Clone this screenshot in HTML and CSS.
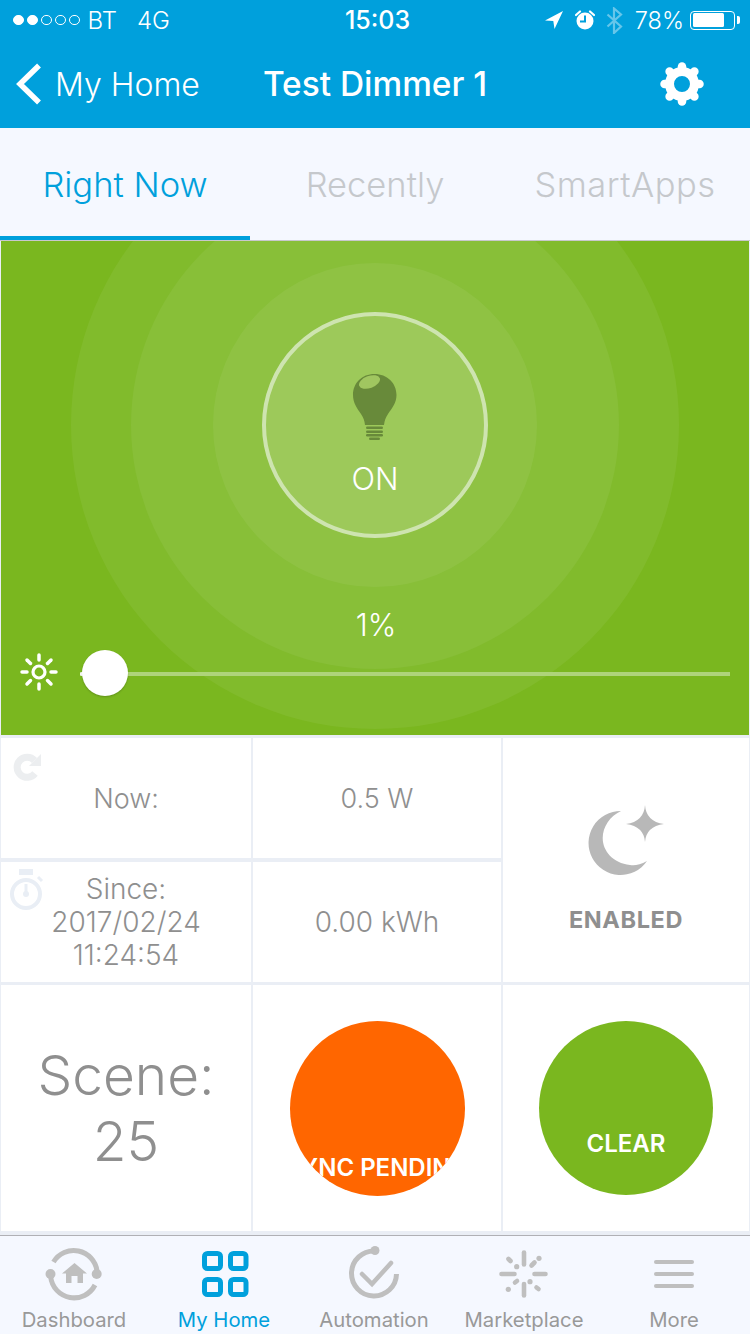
FILE: index.html
```html
<!DOCTYPE html>
<html lang="en">
<head>
<meta charset="utf-8">
<title>Test Dimmer 1</title>
<link rel="stylesheet" href="styles.css">
</head>
<body>
<div class="app">
  <header class="top">
    <div class="status">
      <div class="status-left">
        <span class="dots"><i class="dot on"></i><i class="dot on"></i><i class="dot"></i><i class="dot"></i><i class="dot"></i></span>
        <span class="carrier">BT</span>
        <span class="net">4G</span>
      </div>
      <div class="clock">15:03</div>
      <div class="status-right">
        <svg class="st-loc" width="18" height="18" viewBox="0 0 18 18"><path d="M18 0 L0 9.5 L8.3 10 L9.5 18 Z" fill="#fff"/></svg>
        <svg class="st-alarm" width="20" height="20" viewBox="0 0 20 20"><circle cx="10" cy="11" r="8.5" fill="#fff"/><path d="M10 5.5V11.5H5" fill="none" stroke="#00a0dc" stroke-width="2"/><path d="M1 5 L5 1.5 M19 5 L15 1.5" stroke="#fff" stroke-width="2.2" stroke-linecap="round"/></svg>
        <svg class="st-bt" width="17" height="27" viewBox="0 0 17 27"><path d="M1.5 7.5 L15 19.500 L8 26 V1.500 L15 7.500 L1.500 19.500" fill="none" stroke="#fff" stroke-width="2.200"/></svg>
        <span class="pct">78%</span>
        <span class="battery"><span class="battery-fill"></span></span>
      </div>
    </div>
    <div class="nav">
      <div class="nav-back">
        <svg width="26" height="42" viewBox="0 0 26 42"><path d="M23 2.5 L4 21 L23 39.5" fill="none" stroke="#fff" stroke-width="5.5"/></svg>
        <span>My Home</span>
      </div>
      <div class="nav-title">Test Dimmer 1</div>
      <div class="nav-gear">
        <svg width="44" height="44" viewBox="0 0 44 44"><circle cx="22" cy="22" r="12.5" fill="none" stroke="#fff" stroke-width="9"/><g stroke="#fff" stroke-width="8.5" stroke-linecap="round"><path d="M22 4.5V7"/><path d="M22 37V39.5"/><path d="M4.5 22H7"/><path d="M37 22H39.5"/><path d="M9.6 9.6L11.4 11.4"/><path d="M32.6 32.6L34.4 34.4"/><path d="M9.6 34.4L11.4 32.6"/><path d="M32.6 11.4L34.4 9.6"/></g></svg>
      </div>
    </div>
  </header>

  <nav class="tabs">
    <div class="tab active">Right Now</div>
    <div class="tab">Recently</div>
    <div class="tab">SmartApps</div>
  </nav>

  <main class="content">
    <section class="hero">
      <div class="ring ring-a"></div>
      <div class="ring ring-b"></div>
      <div class="ring ring-c"></div>
      <div class="switch">
        <svg class="bulb" width="46" height="68" viewBox="0 0 46 68"><path d="M22.5 1C10 1 1 10 1 22C1 30 5 35 9 41C11.500 44.500 12.500 48 13 52H32C32.500 48 33.500 44.500 36 41C40 35 44.500 30 44.500 22C44.500 10 35 1 22.500 1Z" fill="#688a3a"/><ellipse cx="17.500" cy="9" rx="11" ry="6" transform="rotate(-20 17.500 9)" fill="#a0c660"/><g fill="#688a3a"><rect x="14" y="53.500" width="17" height="2.500" rx="1.200"/><rect x="14" y="57.500" width="17" height="2.500" rx="1.200"/><rect x="14" y="61" width="17" height="2.500" rx="1.200"/><rect x="17" y="64.500" width="11" height="2.500" rx="1.200"/></g></svg>
        <span class="switch-label">ON</span>
      </div>
      <div class="level">1%</div>
      <div class="slider">
        <svg class="sun" width="40" height="40" viewBox="0 0 40 40"><circle cx="20" cy="20" r="6" fill="none" stroke="#fff" stroke-width="3.200"/><g stroke="#fff" stroke-width="3.500" stroke-linecap="round"><path d="M20 3V8"/><path d="M20 32V37"/><path d="M3 20H8"/><path d="M32 20H37"/><path d="M8 8L11.500 11.500"/><path d="M28.500 28.500L32 32"/><path d="M8 32L11.500 28.500"/><path d="M28.500 11.500L32 8"/></g></svg>
        <div class="track">
          <span class="nub"></span>
          <span class="thumb"></span>
        </div>
      </div>
    </section>

    <section class="tiles">
      <div class="tile t-now">
        <svg class="corner refresh" width="30" height="30" viewBox="0 0 30 30"><path d="M22 21.500A10 10 0 1 1 21.500 8.500" fill="none" stroke="#eceef0" stroke-width="7"/><path d="M28 2V14H16Z" fill="#eceef0"/></svg>
        <span>Now:</span>
      </div>
      <div class="tile t-watt">0.5 W</div>
      <div class="tile t-mode">
        <svg class="moon" width="76" height="70" viewBox="0 0 76 70"><path d="M33 6A32 32 0 1 0 59 56C52 60 46 61 42 60C25 58 14.700 46 14.700 33C14.700 22 22 11 33 6Z" fill="#b8b8b8"/><path d="M57 0Q58 16.500 76 19Q58 21.500 57 37Q56 21.500 38 19Q56 16.500 57 0Z" fill="#b8b8b8"/></svg>
        <span class="mode-label">ENABLED</span>
      </div>
      <div class="tile t-since">
        <svg class="corner watch" width="34" height="42" viewBox="0 0 34 42"><rect x="9" y="0" width="14" height="6" fill="#e9eef5"/><circle cx="16" cy="25" r="14" fill="none" stroke="#e9eef5" stroke-width="4"/><path d="M16 15V25" stroke="#e9eef5" stroke-width="3"/><circle cx="16" cy="25" r="3" fill="#e9eef5"/><path d="M28 8L32 12" stroke="#e9eef5" stroke-width="3"/></svg>
        <span>Since:<br>2017/02/24<br>11:24:54</span>
      </div>
      <div class="tile t-kwh">0.00 kWh</div>
      <div class="tile t-scene">Scene:<br>25</div>
      <div class="tile t-sync"><div class="badge badge-orange"><span>SYNC PENDING</span></div></div>
      <div class="tile t-clear"><div class="badge badge-green"><span>CLEAR</span></div></div>
    </section>
  </main>

  <footer class="tabbar">
    <div class="item">
      <svg width="60" height="60" viewBox="-1 0 60 60"><g fill="none" stroke="#bfbfbf" stroke-width="5"><path d="M5.700 33A23.500 23.500 0 0 0 50 41"/><path d="M8.500 18A23.500 23.500 0 0 1 52 27"/></g><circle cx="5.500" cy="30" r="5" fill="#bfbfbf"/><circle cx="51.700" cy="30" r="5" fill="#bfbfbf"/><path d="M29.500 19L42 29.500H38V39H32.500V32H26.500V39H21V29.500H17Z" fill="#bfbfbf"/></svg>
      <span>Dashboard</span>
    </div>
    <div class="item active">
      <svg width="60" height="60" viewBox="-1 0 60 60"><g fill="none" stroke="#00a0dc" stroke-width="5"><rect x="9.500" y="9.500" width="16" height="15" rx="3"/><rect x="35.500" y="9.500" width="15.500" height="15" rx="3"/><rect x="9.500" y="35.500" width="16" height="15" rx="3"/><rect x="35.500" y="35.500" width="15.500" height="15" rx="3"/></g></svg>
      <span>My Home</span>
    </div>
    <div class="item">
      <svg width="60" height="60" viewBox="-1 0 60 60"><path d="M30 7A22.500 22.500 0 1 0 51.500 30" fill="none" stroke="#bfbfbf" stroke-width="5"/><circle cx="30" cy="6.500" r="4.500" fill="#bfbfbf"/><path d="M17 30L27 40L46 19" fill="none" stroke="#bfbfbf" stroke-width="4.500" stroke-linecap="round"/></svg>
      <span>Automation</span>
    </div>
    <div class="item">
      <svg width="60" height="60" viewBox="0 0 60 60"><g stroke="#bfbfbf" stroke-width="4.600" stroke-linecap="round"><path d="M30 8.500V20.500"/><path d="M30 40V51.500"/><path d="M7.500 30H20.500"/><path d="M40.500 30H51.500"/><path d="M37.500 21.500L40.500 18.500"/><path d="M21 38.500L23 37"/><path d="M14.500 15L16.500 17"/><path d="M42.500 43.500L44.500 45"/></g><g fill="#bfbfbf"><circle cx="45" cy="14.300" r="2.600"/><circle cx="22.700" cy="22.700" r="2.600"/><circle cx="36" cy="37.700" r="2.600"/><circle cx="14.300" cy="45.300" r="2.600"/></g></svg>
      <span>Marketplace</span>
    </div>
    <div class="item">
      <svg width="60" height="60" viewBox="-1 0 60 60"><g fill="#bfbfbf"><rect x="9" y="16" width="40" height="4" rx="2"/><rect x="9" y="28" width="40" height="4" rx="2"/><rect x="9" y="40" width="40" height="4" rx="2"/></g></svg>
      <span>More</span>
    </div>
  </footer>
</div>
</body>
</html>
```

FILE: styles.css
```css
* { box-sizing: border-box; }
html, body { margin: 0; padding: 0; }
body { width: 750px; height: 1334px; overflow: hidden; font-family: Inter, "Liberation Sans", sans-serif; background: #eaeef5; }
.app { width: 750px; height: 1334px; display: flex; flex-direction: column; overflow: hidden; }

.top { height: 128px; background: #00a0dc; color: #fff; flex: none; }
.status { height: 40px; padding: 0 15px 0 13px; display: grid; grid-template-columns: 1fr auto 1fr; align-items: center; font-size: 24px; font-weight: 300; }
.status-left { display: flex; align-items: center; }
.dots { display: flex; gap: 3.500px; margin-right: 8px; }
.dot { width: 10.500px; height: 10.500px; border-radius: 50%; border: 1px solid #fff; display: block; }
.dot.on { background: #fff; }
.net { margin-left: 20px; }
.clock { font-size: 25px; font-weight: 500; margin-left: 7px; }
.status-right { display: flex; align-items: center; justify-content: flex-end; }
.st-loc { margin-right: 12px; }
.st-alarm { margin-right: 11px; }
.st-bt { opacity: .4; margin-right: 12px; }
.pct { font-size: 23.500px; }
.battery { width: 45px; height: 19px; margin-left: 6px; border: 1.500px solid #fff; border-radius: 4px; padding: 1.500px; position: relative; display: block; }
.battery::after { content: ""; position: absolute; right: -6px; top: 4px; width: 3px; height: 8px; background: #fff; border-radius: 0 2px 2px 0; }
.battery-fill { display: block; height: 100%; width: 78%; background: #fff; border-radius: 1.500px; }

.nav { height: 88px; display: grid; grid-template-columns: 1fr auto 1fr; align-items: center; padding: 0 16px; }
.nav-back { display: flex; align-items: center; gap: 13px; font-size: 32px; font-weight: 300; }
.nav-title { font-size: 33.400px; font-weight: 500; }
.nav-gear { display: flex; justify-content: flex-end; padding-right: 30px; }

.tabs { height: 113px; flex: none; display: flex; background: #f5f8ff; border-bottom: 1px solid #c8c8cc; }
.tab { width: 250px; display: flex; align-items: center; justify-content: center; padding-top: 1px; font-size: 34.500px; font-weight: 300; color: #c5c8cc; }
.tab:last-child { letter-spacing: .5px; }
.tab.active { color: #00a0dc; height: 112px; padding-top: 5px; border-bottom: 4px solid #00a0dc; }

.content { flex: 1; padding: 0 1px; }
.hero { height: 494px; background: #7ab71f; position: relative; overflow: hidden; display: flex; flex-direction: column; align-items: center; }
.ring { position: absolute; border-radius: 50%; background: rgba(255, 255, 255, .06); }
.ring-a { width: 608px; height: 608px; left: 70px; top: -120px; }
.ring-b { width: 488px; height: 488px; left: 130px; top: -60px; }
.ring-c { width: 324px; height: 324px; left: 212px; top: 22px; }
.switch { width: 226px; height: 226px; margin-top: 71px; border-radius: 50%; border: 4px solid #cee4b0; background: rgba(255, 255, 255, .125); position: relative; display: flex; flex-direction: column; align-items: center; padding-top: 57px; }
.bulb { display: block; }
.switch-label { margin-top: 20px; font-size: 31px; line-height: 36px; font-weight: 300; color: #fff; }
.level { position: relative; margin-top: 69px; padding-left: 2px; font-size: 30.500px; line-height: 36px; font-weight: 300; color: #fff; }
.slider { position: relative; width: 100%; margin-top: 9px; display: flex; align-items: center; padding: 0 19px 0 18px; }
.sun { flex: none; }
.track { flex: 1; height: 4px; margin: 4px 0 0 21px; position: relative; background: #aed47a; }
.nub { position: absolute; left: 0; top: 0; width: 4px; height: 4px; border-radius: 50%; background: #fff; }
.thumb { position: absolute; left: 2px; top: -22px; width: 46px; height: 46px; border-radius: 50%; background: #fff; box-shadow: 0 1px 2px rgba(0, 0, 0, .2); }

.tiles { margin-top: 3px; display: grid; grid-template-columns: 250px 248px 246px; column-gap: 2px; grid-template-rows: 120px 124px 249px; background: #eaeef5; }
.tile { background: #fff; display: flex; flex-direction: column; align-items: center; justify-content: center; position: relative; text-align: center; color: #8f8f8f; font-size: 27px; font-weight: 300; line-height: 33px; }
.t-since, .t-kwh { grid-row: 2; margin-top: 4px; font-size: 28px; }
.t-since { padding-top: 1px; }
.t-mode { grid-column: 3; grid-row: 1 / span 2; padding-top: 19px; }
.t-scene, .t-sync, .t-clear { grid-row: 3; margin-top: 3px; }
.t-scene { font-size: 55px; line-height: 66px; }
.corner { position: absolute; }
.refresh { left: 12px; top: 14px; }
.watch { left: 9px; top: 7px; }
.moon { display: block; }
.mode-label { margin-top: 31px; font-size: 23.500px; font-weight: 700; letter-spacing: .6px; line-height: 28px; color: #8f8f8f; }
.badge { border-radius: 50%; overflow: hidden; position: relative; display: flex; justify-content: center; color: #fff; font-size: 24px; font-weight: 600; line-height: 28px; white-space: nowrap; }
.badge-orange { width: 175px; height: 175px; background: #f60; padding-top: 133px; }
.badge-green { width: 174px; height: 174px; background: #7ab71f; padding-top: 109px; }

.tabbar { width: 751px; height: 99px; flex: none; margin-left: -1px; background: #f5f8ff; border-top: 1px solid #b0b0b5; display: flex; overflow: hidden; }
.item { width: 150px; display: flex; flex-direction: column; align-items: center; padding-top: 8px; color: #999; font-size: 20.300px; line-height: 26px; font-weight: 400; }
.item svg { display: block; flex: none; }
.item span { margin-top: 3px; }
.item.active { color: #00a0dc; }
```
